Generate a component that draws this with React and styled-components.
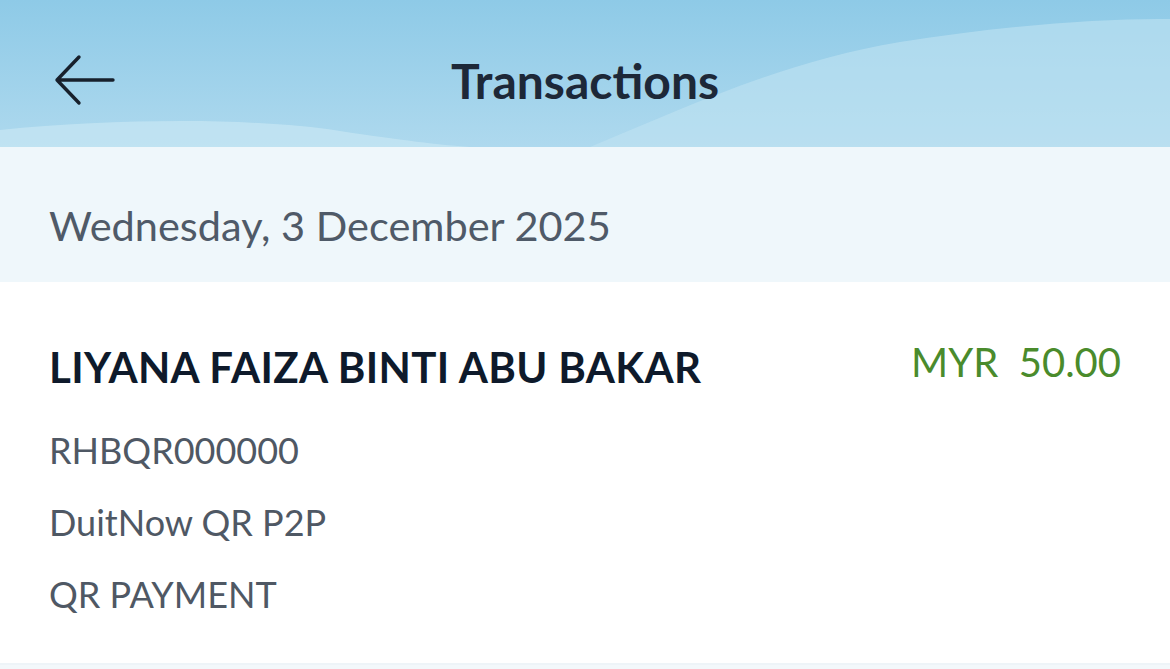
import React from 'react'
import styled, { createGlobalStyle } from 'styled-components'

const GlobalStyle = createGlobalStyle`
  html, body {
    margin: 0;
    padding: 0;
    background: #ffffff;
    font-family: Lato, "Open Sans", sans-serif;
  }
`

const BackArrow = () => (
  <svg width="62" height="52" viewBox="0 0 62 52" fill="none">
    <path d="M60 26H4M26 3L4 26L26 49" stroke="#17202c" strokeWidth="3.4" strokeLinecap="round" strokeLinejoin="round" />
  </svg>
)

// decorative sky + soft wave humps behind the header
const Waves = () => (
  <WaveSvg viewBox="0 0 1170 147" preserveAspectRatio="none">
    <defs>
      <linearGradient id="sky" x1="0" y1="0" x2="0" y2="1">
        <stop offset="0" stopColor="#8ecae7" />
        <stop offset="1" stopColor="#aed9ee" />
      </linearGradient>
    </defs>
    <rect width="1170" height="147" fill="url(#sky)" />
    <path d="M590 147C680 110 780 62 900 42C1000 26 1100 18 1170 19L1170 147Z" fill="#bfe2f2" opacity="0.6" />
    <path d="M0 130C120 118 260 118 340 131C400 140 440 145 470 147L0 147Z" fill="#c6e5f3" opacity="0.75" />
  </WaveSvg>
)

const App = () => (
  <>
    <GlobalStyle />
    <Page>
      <Header>
        <Waves />
        <BackButton aria-label="Back"><BackArrow /></BackButton>
        <Title>Transactions</Title>
      </Header>

      <DateBand>Wednesday, 3 December 2025</DateBand>

      <Row>
        <RowTop>
          <Name>LIYANA FAIZA BINTI ABU BAKAR</Name>
          <Amount>MYR&nbsp;&nbsp;50.00</Amount>
        </RowTop>
        <Detail>RHBQR000000</Detail>
        <Detail>DuitNow QR P2P</Detail>
        <Detail>QR PAYMENT</Detail>
      </Row>
      <Footer />
    </Page>
  </>
)

export default App

const Page = styled.div`
  width: 1170px;
  height: 669px;
  overflow: hidden;
  display: flex;
  flex-direction: column;
`

const Header = styled.header`
  position: relative;
  height: 147px;
  flex-shrink: 0;
  display: flex;
  align-items: center;
  justify-content: center;
`

const WaveSvg = styled.svg`
  position: absolute;
  inset: 0;
  width: 100%;
  height: 100%;
`

const BackButton = styled.button`
  position: absolute;
  left: 53px;
  top: 54px;
  padding: 0;
  border: 0;
  background: none;
  display: flex;
`

const Title = styled.h1`
  position: relative;
  margin: 14px 0 0;
  font-size: 48px;
  font-weight: 700;
  color: #1d2838;
`

const DateBand = styled.div`
  height: 135px;
  flex-shrink: 0;
  box-sizing: border-box;
  padding: 58px 0 0 49px;
  background: #eff7fb;
  font-size: 41.5px;
  line-height: 1;
  color: #4f5a68;
`

const Row = styled.section`
  height: 383px;
  flex-shrink: 0;
  box-sizing: border-box;
  padding: 64px 49px 0 49px;
  background: #ffffff;
  border-bottom: 2px solid #eef4f8;
`

const RowTop = styled.div`
  display: flex;
  justify-content: space-between;
  align-items: flex-start;
  margin-bottom: 26px;
`

const Name = styled.div`
  font-size: 42px;
  font-weight: 700;
  line-height: 1;
  letter-spacing: 0.35px;
  color: #0e1a2b;
`

const Amount = styled.div`
  font-size: 40px;
  line-height: 1;
  margin-top: -4px;
  color: #4a8b2c;
`

const Detail = styled.div`
  font-size: 36px;
  line-height: 72px;
  color: #4f5864;
`

const Footer = styled.div`
  flex: 1;
  background: #f3f8fb;
`
